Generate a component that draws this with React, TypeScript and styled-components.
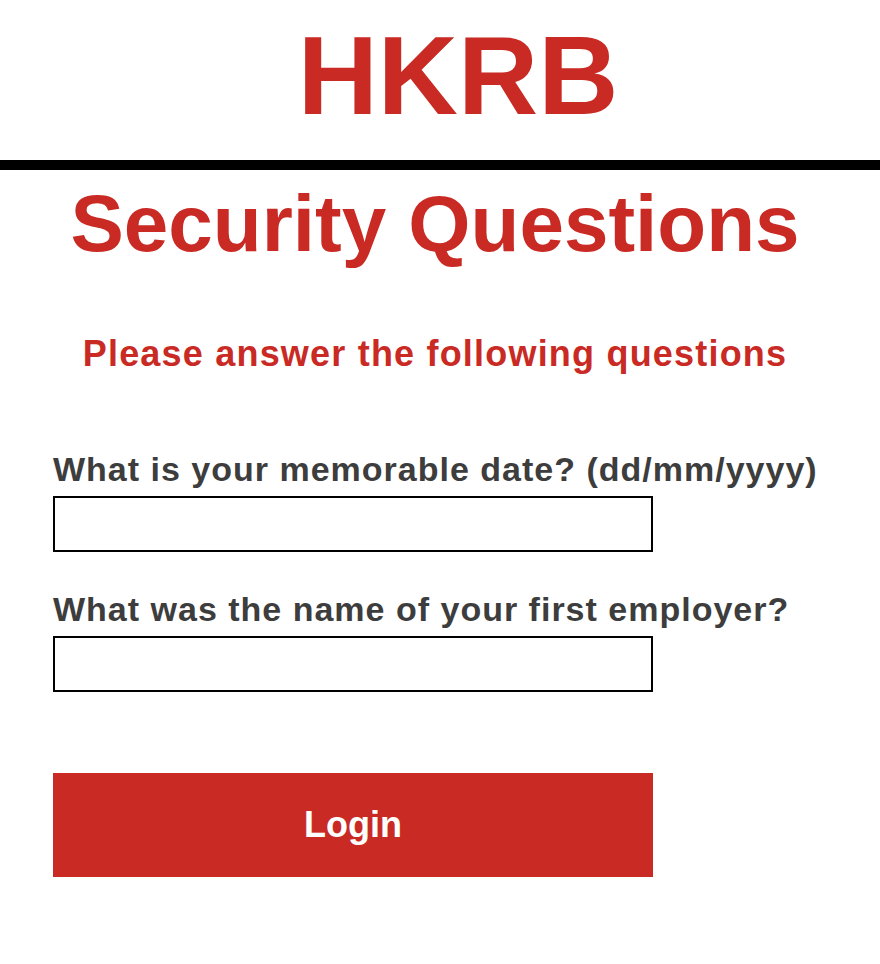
import React from "react";
import styled, { createGlobalStyle } from "styled-components";

const RED = "#c92a24";

const Global = createGlobalStyle`
  html, body { margin: 0; padding: 0; background: #fff; }
  body { font-family: "Liberation Sans", Arial, Helvetica, sans-serif; }
`;

const Header = styled.header`
  display: flex;
  justify-content: center;
  padding: 21px 0 0 36px;
  height: 170px;
  box-sizing: border-box;
  border-bottom: 10px solid #000;
`;

const Logo = styled.h1`
  margin: 0;
  font-size: 111px;
  font-weight: 700;
  color: ${RED};
  line-height: 1;
`;

const Main = styled.main`
  display: flex;
  flex-direction: column;
  padding: 0 63px 0 53px;
`;

const Title = styled.h2`
  margin: 14px 0 0;
  text-align: center;
  font-size: 80px;
  line-height: 1;
  font-weight: 700;
  color: ${RED};
`;

const Subtitle = styled.p`
  margin: 72px 0 0;
  text-align: center;
  font-size: 36px;
  letter-spacing: 1.2px;
  line-height: 1;
  font-weight: 700;
  color: ${RED};
`;

const Form = styled.form`
  display: flex;
  flex-direction: column;
  margin-top: 80px;
  width: 600px;
`;

const Field = styled.div`
  display: flex;
  flex-direction: column;
  margin-bottom: 40px;
`;

const Label = styled.label`
  font-size: 34px;
  letter-spacing: 1px;
  font-weight: 700;
  color: #3d3d3d;
  line-height: 1;
  white-space: nowrap;
  margin-bottom: 10px;
`;

const Input = styled.input`
  width: 600px;
  height: 56px;
  box-sizing: border-box;
  border: 2px solid #000;
  margin: 0;
  padding: 0 10px;
  font-size: 28px;
  font-family: inherit;
  outline: none;
`;

const Button = styled.button`
  margin-top: 41px;
  width: 600px;
  height: 104px;
  border: none;
  background: ${RED};
  color: #fff;
  font-family: inherit;
  font-size: 36px;
  font-weight: 700;
  cursor: pointer;
`;

export default function App() {
  return (
    <>
      <Global />
      <Header>
        <Logo>HKRB</Logo>
      </Header>
      <Main>
        <Title>Security Questions</Title>
        <Subtitle>Please answer the following questions</Subtitle>
        <Form onSubmit={(e) => e.preventDefault()}>
          <Field>
            <Label htmlFor="q1">What is your memorable date? (dd/mm/yyyy)</Label>
            <Input id="q1" type="text" />
          </Field>
          <Field>
            <Label htmlFor="q2">What was the name of your first employer?</Label>
            <Input id="q2" type="text" />
          </Field>
          <Button type="submit">Login</Button>
        </Form>
      </Main>
    </>
  );
}
